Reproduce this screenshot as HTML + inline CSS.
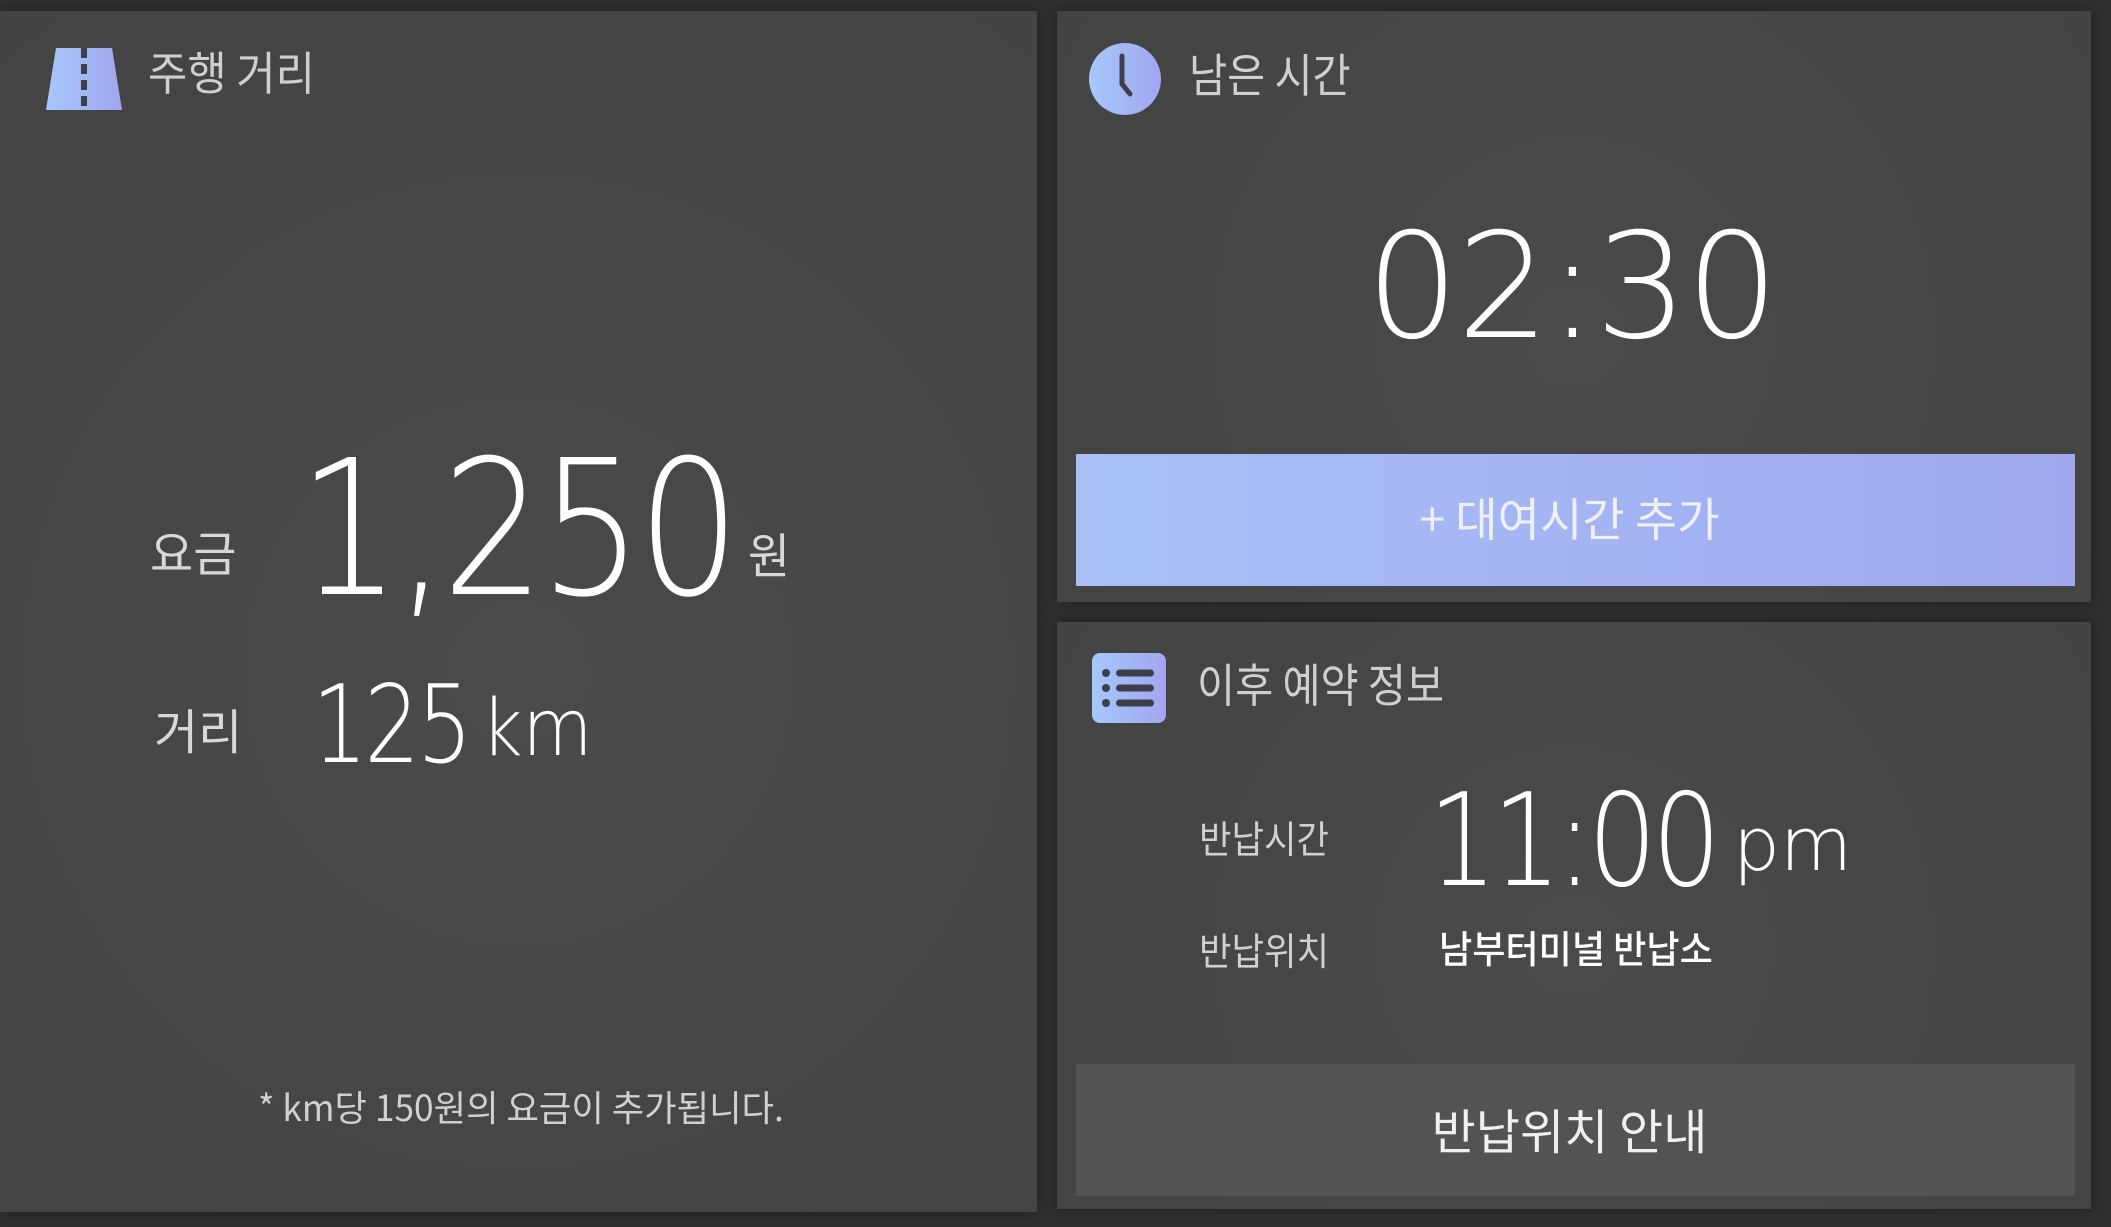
<!DOCTYPE html>
<html><head><meta charset="utf-8"><style>
*{margin:0;padding:0;box-sizing:border-box}
body{width:2111px;height:1227px;background:#2f2f2f;position:relative;overflow:hidden;font-family:"Liberation Sans","Noto Sans CJK KR",sans-serif;color:#d0d0d0}
.p{position:absolute;background:radial-gradient(circle at 50% 55%,#4a4a4a 0%,#464646 50%,#434343 100%);box-shadow:0 0 12px rgba(0,0,0,.35)}
.t{position:absolute;white-space:nowrap;line-height:1}
.k{font-family:"Noto Sans CJK KR",sans-serif;transform-origin:left top}
.n{font-family:"DejaVu Sans",sans-serif;font-weight:200;color:#fff;transform-origin:left top}
</style></head><body>
<div class="p" style="left:0;top:11px;width:1037px;height:1201px"></div>
<div class="p" style="left:1057px;top:11px;width:1034px;height:591px"></div>
<div class="p" style="left:1057px;top:622px;width:1034px;height:587px"></div>

<svg style="position:absolute;left:42px;top:46px" width="84" height="68" viewBox="0 0 84 68">
<defs><linearGradient id="g" x1="0" x2="1"><stop offset="0" stop-color="#a6c8fb"/><stop offset="1" stop-color="#a1a6ee"/></linearGradient></defs>
<polygon points="14,2 70,2 80,64 4,64" fill="url(#g)"/>
<line x1="42" y1="2" x2="42" y2="64" stroke="#3d3f4a" stroke-width="6" stroke-dasharray="10,6"/>
</svg>
<div class="t k" style="left:148px;top:48px;font-size:46px;color:#cfcfcf;transform:scaleX(.93)">주행 거리</div>
<div class="t k" style="left:150px;top:526px;font-size:48px;color:#d8d8d8;transform:scaleX(.98)">요금</div>
<div class="t n" style="left:298px;top:436px;font-size:188px;letter-spacing:-6px;transform:scaleX(.86)">1,250</div>
<div class="t k" style="left:748px;top:528px;font-size:48px;color:#d8d8d8;transform:scaleX(.95)">원</div>
<div class="t k" style="left:154px;top:704px;font-size:48px;color:#d8d8d8">거리</div>
<div class="t n" style="left:312px;top:672px;font-size:108px;letter-spacing:-4px;transform:scaleX(.81)">125</div>
<div class="t n" style="left:481px;top:690px;font-size:78px;transform:scaleX(.92)">km</div>
<div class="t k" style="left:258px;top:1088px;font-size:36px;color:#d0d0d0;transform:scaleX(.98)">* km당 150원의 요금이 추가됩니다.</div>

<svg style="position:absolute;left:1088px;top:42px" width="74" height="74" viewBox="0 0 74 74">
<defs><linearGradient id="g2" x1="0" x2="1"><stop offset="0" stop-color="#a6c8fb"/><stop offset="1" stop-color="#a1a6ee"/></linearGradient></defs>
<circle cx="37" cy="37" r="36" fill="url(#g2)"/>
<path d="M34 14 L34 42 L42 52" stroke="#3d3f4a" stroke-width="5" fill="none" stroke-linecap="round"/>
</svg>
<div class="t k" style="left:1189px;top:50px;font-size:46px;color:#cfcfcf;transform:scaleX(.9)">남은 시간</div>
<div class="t n" style="left:1366px;top:214px;font-size:146px;letter-spacing:-2px">02:30</div>
<div style="position:absolute;left:1076px;top:454px;width:999px;height:132px;background:linear-gradient(90deg,#a9c1f8,#9fa8ee)"></div>
<div class="t k" style="left:1070px;top:494px;width:999px;text-align:center;font-size:46px;color:#eef0fa">+ 대여시간 추가</div>

<svg style="position:absolute;left:1092px;top:653px" width="74" height="70" viewBox="0 0 74 70">
<defs><linearGradient id="g3" x1="0" x2="1"><stop offset="0" stop-color="#a6c8fb"/><stop offset="1" stop-color="#a1a6ee"/></linearGradient></defs>
<rect x="0" y="0" width="74" height="70" rx="8" fill="url(#g3)"/>
<g fill="#3d3f4a"><circle cx="14" cy="20" r="4"/><circle cx="14" cy="35" r="4"/><circle cx="14" cy="50" r="4"/>
<rect x="24" y="16.5" width="38" height="7" rx="3.5"/><rect x="24" y="31.5" width="38" height="7" rx="3.5"/><rect x="24" y="46.5" width="38" height="7" rx="3.5"/></g>
</svg>
<div class="t k" style="left:1197px;top:660px;font-size:46px;color:#cfcfcf;transform:scaleX(.9)">이후 예약 정보</div>
<div class="t k" style="left:1199px;top:818px;font-size:38px;color:#d0d0d0;transform:scaleX(.93)">반납시간</div>
<div class="t n" style="left:1428px;top:778px;font-size:128px;letter-spacing:-6px;transform:scaleX(.85)">11:00</div>
<div class="t n" style="left:1733px;top:808px;font-size:74px">pm</div>
<div class="t k" style="left:1199px;top:930px;font-size:38px;color:#d0d0d0;transform:scaleX(.93)">반납위치</div>
<div class="t k" style="left:1439px;top:928px;font-size:38px;color:#fff;font-weight:500;transform:scaleX(.95)">남부터미널 반납소</div>
<div style="position:absolute;left:1076px;top:1064px;width:999px;height:132px;background:#535353"></div>
<div class="t k" style="left:1070px;top:1104px;width:999px;text-align:center;font-size:48px;color:#f0f0f0">반납위치 안내</div>
</body></html>
